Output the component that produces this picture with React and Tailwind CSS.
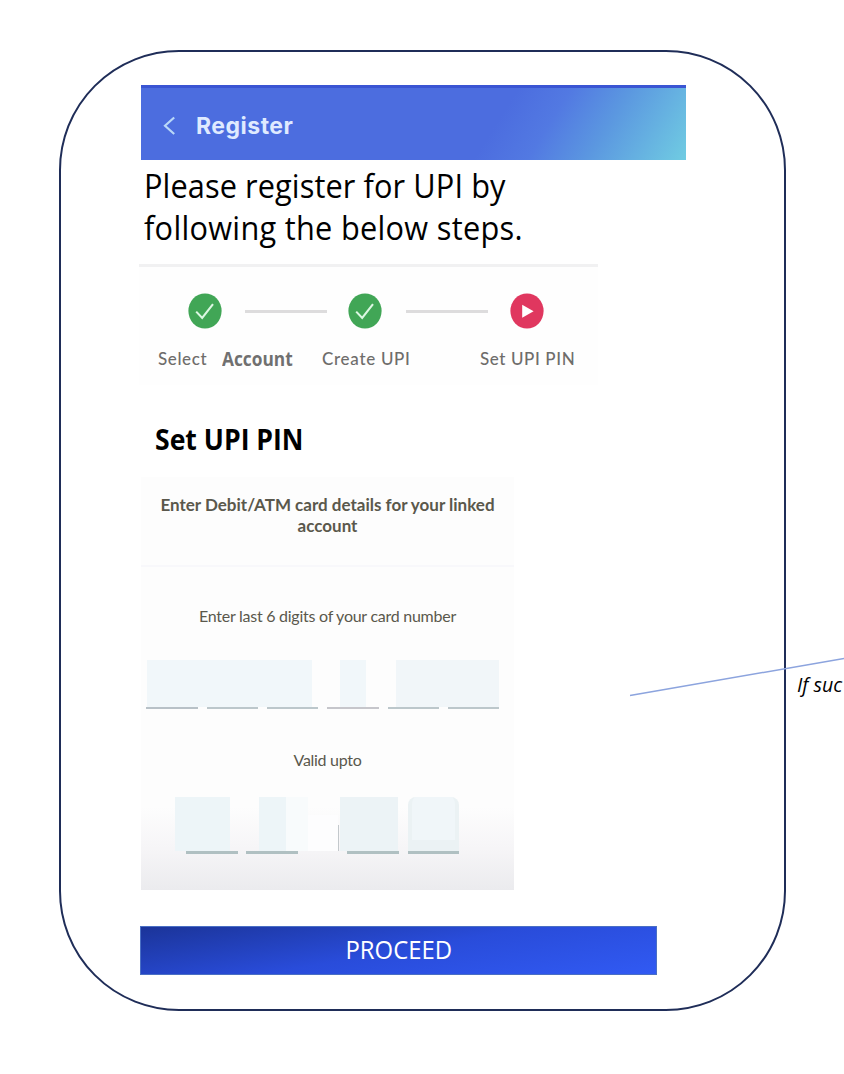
import React from 'react';

const calibri = "font-['Open_Sans',sans-serif]";
const lato = "font-['Lato',sans-serif]";

function Check() {
  return (
    <svg className="h-[36px] w-[34px] shrink-0" viewBox="0 0 34 36">
      <ellipse cx="17" cy="18" rx="16.6" ry="17.6" fill="#41a656" />
      <path d="M8.2 18.6 L14.2 25 L25 11.2" fill="none" stroke="#dcf7e2" strokeWidth="2.1" />
    </svg>
  );
}

function Play() {
  return (
    <svg className="h-[36px] w-[34px] shrink-0" viewBox="0 0 34 36">
      <ellipse cx="17" cy="18" rx="16.6" ry="17.6" fill="#e0375f" />
      <path d="M12.2 11.8 L23.6 18.2 L12.2 24.8 Z" fill="#fff" />
    </svg>
  );
}

function Header() {
  return (
    <header className="flex h-[75px] w-[545px] items-center border-t-[3px] border-[#3a55d3] bg-[linear-gradient(122deg,#4c6ddf_0%,#4c6ddf_64%,#5279e2_73%,#5b97e0_83%,#70cce2_100%)] pl-[22px]">
      <svg className="mt-[4px] h-[20px] w-[13px]" viewBox="0 0 13 20">
        <path d="M11.2 1.5 L2 9.8 L11.2 18" fill="none" stroke="#b9d8f8" strokeWidth="2.2" />
      </svg>
      <h1 className="ml-[20px] mt-[4px] whitespace-nowrap font-['Inter',sans-serif] text-[23px] font-bold leading-none tracking-[0.5px] text-[#dfeaff]">Register</h1>
    </header>
  );
}

function Steps() {
  return (
    <section className="-ml-[2px] mt-[15px] h-[121px] w-[459px] border-t-[3px] border-[#f1f1f2] bg-[#fefefe]">
      <div className="flex items-center pl-[49px] pt-[26px]">
        <Check />
        <span className="ml-[23px] h-[3px] w-[82px] bg-[#dddcdd]" />
        <span className="w-[21px]" />
        <Check />
        <span className="ml-[24px] h-[3px] w-[82px] bg-[#dddcdd]" />
        <span className="w-[22px]" />
        <Play />
      </div>
      <div className={`mt-[18px] flex h-[24px] items-center whitespace-nowrap pl-[19px] text-[17px] font-medium leading-[24px] text-[#6e6d6b] ${lato}`}>
        <span className="w-[64px] tracking-[0.6px]">Select</span>
        <span className={`w-[100px] text-[19px] font-bold text-[#707070] ${calibri}`}>
          <span className="inline-block origin-left scale-x-[0.91]">Account</span>
        </span>
        <span className="w-[158px] tracking-[0.7px]">Create UPI</span>
        <span className="tracking-[0.6px]">Set UPI PIN</span>
      </div>
    </section>
  );
}

function Card() {
  return (
    <section className={`mt-[18px] h-[413px] w-[373px] bg-[linear-gradient(to_bottom,#fdfdfd_0%,#fdfdfd_80%,#f6f5f7_90%,#ebebee_100%)] text-[#5a584c] ${lato}`}>
      <p className="h-[90px] border-b-2 border-[#f8f8fb] pt-[17px] text-center text-[17px] font-bold leading-[21px]">
        Enter Debit/ATM card details for your linked<br />account
      </p>
      <p className="mt-[37px] whitespace-nowrap text-center text-[16px] leading-[24px] tracking-[-0.26px]">Enter last 6 digits of your card number</p>
      <div className="mt-[32px] flex h-[47px] pl-[6px]">
        <span className="w-[165px] bg-[#f1f7fa]" />
        <span className="ml-[28px] w-[26px] bg-[#f1f7fa]" />
        <span className="ml-[30px] w-[103px] bg-[#f1f6f9]" />
      </div>
      <div className="flex gap-[9px] pl-[5px]">
        <span className="h-[2px] w-[52px] bg-[#b8c1c7]" />
        <span className="h-[2px] w-[51px] bg-[#bcc7cb]" />
        <span className="h-[2px] w-[51px] bg-[#bcc7cb]" />
        <span className="h-[2px] w-[52px] bg-[#c6c6cb]" />
        <span className="h-[2px] w-[51px] bg-[#bcc7cb]" />
        <span className="h-[2px] w-[51px] bg-[#bcc7cb]" />
      </div>
      <p className="mt-[39px] text-center text-[16px] leading-[24px] tracking-[-0.3px]">Valid upto</p>
      <div className="mt-[25px] flex h-[54px] pl-[34px]">
        <span className="w-[55px] bg-[#edf5f8]" />
        <span className="ml-[29px] w-[27px] bg-[#edf5f8]" />
        <span className="w-[22px] bg-[#f8fbfc]" />
        <span className="mt-[18px] w-[30px] bg-[#fdfdfe]" />
        <span className="mt-[28px] w-px bg-[#c3c8cc]" />
        <span className="ml-px w-[58px] bg-[#ecf3f6]" />
        <span className="ml-[10px] w-[51px] rounded-t-lg border-x-4 border-b-[11px] border-[#ebf2f4] bg-[#f0f6f9]" />
      </div>
      <div className="flex pl-[45px]">
        <span className="h-[3px] w-[52px] bg-[#b0c0c2]" />
        <span className="ml-[8px] h-[3px] w-[52px] bg-[#b0c0c2]" />
        <span className="ml-[49px] h-[3px] w-[52px] bg-[#b0c0c2]" />
        <span className="ml-[9px] h-[3px] w-[51px] bg-[#b0c0c2]" />
      </div>
    </section>
  );
}

export default function App() {
  return (
    <main className="relative h-[1074px] w-[844px] overflow-hidden bg-white pl-[59px] pt-[50px]">
      <div className="h-[961px] w-[727px] rounded-[120px] border-2 border-[#1f2d58] pl-[80px] pt-[33px]">
        <Header />
        <p className={`ml-[3px] mt-[5px] w-max origin-left scale-x-[0.96] whitespace-nowrap text-[32px] leading-[42px] tracking-[0.3px] text-black ${calibri}`}>
          <span className="tracking-[0.1px]">Please register for UPI by</span><br />following the below steps.
        </p>
        <Steps />
        <h2 className={`ml-[14px] mt-[36px] h-[36px] w-max origin-left scale-x-[0.95] text-[28px] font-bold leading-[36px] text-black ${calibri}`}>Set UPI PIN</h2>
        <div className="h-[2px]" />
        <Card />
        <button className={`-ml-px mt-[36px] flex h-[49px] w-[517px] items-center justify-center border border-[#4a6fc4] bg-[linear-gradient(170deg,#1b3499_0%,#294cda_50%,#315af3_100%)] pb-[2px] text-[25px] text-white ${calibri}`}>
          <span className="scale-x-[0.955]">PROCEED</span>
        </button>
      </div>
      <svg className="absolute left-[628px] top-[650px] h-[50px] w-[216px]" viewBox="0 0 216 50">
        <path d="M2 45.5 L216 8.5" stroke="#8ca4de" strokeWidth="1.5" />
      </svg>
      <span className={`absolute left-[797px] top-[671px] origin-left scale-x-[0.98] whitespace-nowrap text-[20px] font-medium italic leading-[28px] text-black ${calibri}`}>If suc</span>
    </main>
  );
}
